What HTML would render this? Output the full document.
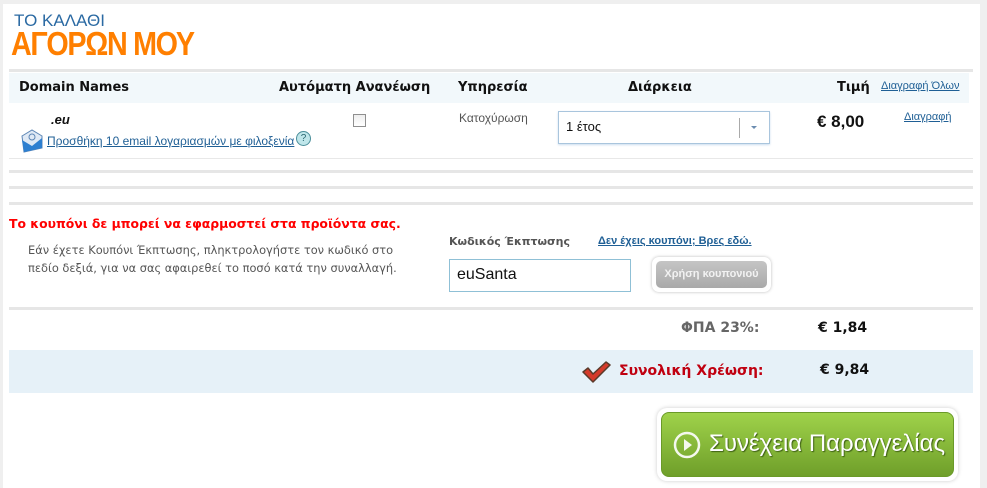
<!DOCTYPE html>
<html><head><meta charset="utf-8"><style>
*{margin:0;padding:0;box-sizing:border-box}
body{width:987px;height:488px;background:#efefef;position:relative;overflow:hidden;font-family:"Liberation Sans",Arial,sans-serif}
.panel{position:absolute;left:3px;top:4px;width:977px;height:484px;background:#fff}
.a{position:absolute;white-space:nowrap}
.bar{position:absolute;left:9px;width:964px;background:#e6e6e6}
.dv{font-family:"DejaVu Sans",Verdana,sans-serif}
a{color:#1f5f95}
</style></head><body>
<div class="panel"></div>
<div class="a" style="left:14px;top:11px;font-size:17px;color:#2b6aa3">ΤΟ ΚΑΛΑΘΙ</div>
<div class="a" style="left:11px;top:25px;font-size:33px;font-weight:bold;color:#ff7f00;letter-spacing:-1.5px;transform:scaleX(0.87);transform-origin:left">ΑΓΟΡΩΝ ΜΟΥ</div>
<div class="bar" style="top:69px;height:3px"></div>
<div class="a" style="left:9px;top:73px;width:960px;height:30px;background:#f2f8fb"></div>
<div class="a dv" style="left:19px;top:80px;font-size:13px;font-weight:bold;color:#111">Domain Names</div>
<div class="a dv" style="left:279px;top:80px;font-size:13px;font-weight:bold;color:#111">Αυτόματη Ανανέωση</div>
<div class="a dv" style="left:458px;top:80px;font-size:13px;font-weight:bold;color:#111">Υπηρεσία</div>
<div class="a dv" style="left:628px;top:80px;font-size:13px;font-weight:bold;color:#111">Διάρκεια</div>
<div class="a dv" style="left:837px;top:80px;font-size:13px;font-weight:bold;color:#111">Τιμή</div>
<div class="a" style="left:881px;top:80px;font-size:11px"><a href="#">Διαγραφή Όλων</a></div>
<div class="a" style="left:51px;top:112px;font-size:13px;font-weight:bold;font-style:italic;color:#111">.eu</div>
<svg class="a" style="left:20px;top:128px" width="24" height="26" viewBox="0 0 24 26"><path d="M2 8 L12 2 L22 8 L22 20 L4 24 Z" fill="#dfe9f5" stroke="#5d86b5"/><path d="M2 12 L12 18 L22 10 L22 20 L4 24Z" fill="#2d7fd0"/><circle cx="12" cy="9" r="3" fill="none" stroke="#5d86b5"/></svg>
<div class="a" style="left:47px;top:134px;font-size:12px"><a href="#">Προσθήκη 10 email λογαριασμών με φιλοξενία</a></div>
<div class="a" style="left:296px;top:131px;width:15px;height:15px;border-radius:50%;background:#bfe6ea;border:1px solid #4a8e9a;font-size:10px;color:#2a6670;text-align:center;line-height:13px">?</div>
<div class="a" style="left:353px;top:114px;width:13px;height:13px;border:1px solid #8f8f8f;background:linear-gradient(#eee,#fff)"></div>
<div class="a" style="left:459px;top:111px;font-size:12px;color:#555">Κατοχύρωση</div>
<div class="a" style="left:558px;top:111px;width:212px;height:33px;border:1px solid #a9c5dd;background:#fff;box-shadow:0 1px 2px #cde"></div>
<div class="a" style="left:739px;top:118px;width:1px;height:20px;background:#aaa"></div>
<div class="a" style="left:751px;top:126px;width:0;height:0;border-left:3px solid transparent;border-right:3px solid transparent;border-top:3px solid #6b8cb0"></div>
<div class="a" style="left:566px;top:119px;font-size:13px;color:#111">1 έτος</div>
<div class="a" style="left:817px;top:112px;font-size:17px;font-weight:bold;color:#111">€ 8,00</div>
<div class="a" style="left:904px;top:111px;font-size:11px"><a href="#">Διαγραφή</a></div>
<div class="bar" style="top:158px;height:1px;background:#e8e8e8"></div>
<div class="bar" style="top:170px;height:3px"></div>
<div class="bar" style="top:186px;height:3px"></div>
<div class="bar" style="top:202px;height:3px"></div>
<div class="a dv" style="left:9px;top:216px;font-size:12.4px;font-weight:bold;color:#f00">Το κουπόνι δε μπορεί να εφαρμοστεί στα προϊόντα σας.</div>
<div class="a dv" style="left:28px;top:241px;font-size:11.4px;line-height:18px;color:#555">Εάν έχετε Κουπόνι Έκπτωσης, πληκτρολογήστε τον κωδικό στο<br>πεδίο δεξιά, για να σας αφαιρεθεί το ποσό κατά την συναλλαγή.</div>
<div class="a dv" style="left:449px;top:235px;font-size:11px;font-weight:bold;color:#555">Κωδικός Έκπτωσης</div>
<div class="a" style="left:598px;top:235px;font-size:11px;font-weight:bold"><a href="#">Δεν έχεις κουπόνι; Βρες εδώ.</a></div>
<div class="a" style="left:449px;top:259px;width:182px;height:33px;border:1px solid #8fc0d6"></div>
<div class="a" style="left:457px;top:266px;font-size:16px;color:#111">euSanta</div>
<div class="a" style="left:652px;top:257px;width:119px;height:35px;border-radius:7px;background:#fff;box-shadow:0 0 3px #bbb"></div>
<div class="a" style="left:656px;top:261px;width:111px;height:27px;border-radius:5px;background:linear-gradient(#c5c5c5,#a9a9a9);color:#f2f2f2;font-size:11px;font-weight:bold;text-align:center;line-height:27px">Χρήση κουπονιού</div>
<div class="bar" style="top:307px;height:3px"></div>
<div class="a dv" style="left:681px;top:320px;font-size:14px;font-weight:bold;color:#666">ΦΠΑ 23%:</div>
<div class="a dv" style="left:818px;top:320px;font-size:14px;font-weight:bold;color:#111">€ 1,84</div>
<div class="a" style="left:9px;top:350px;width:964px;height:43px;background:#e6f1f8"></div>
<svg class="a" style="left:581px;top:359px" width="30" height="25" viewBox="0 0 30 25"><path d="M2 13 L7 9 L12 15 L25 3 L29 6 L12 23 Z" fill="#d43a2a" stroke="#5a3a2a" stroke-width="1.5" stroke-linejoin="round"/></svg>
<div class="a dv" style="left:619px;top:363px;font-size:14px;font-weight:bold;color:#c00010">Συνολική Χρέωση:</div>
<div class="a dv" style="left:820px;top:362px;font-size:14px;font-weight:bold;color:#111">€ 9,84</div>
<div class="a" style="left:657px;top:408px;width:301px;height:73px;border-radius:10px;background:#fff;box-shadow:0 0 4px #ccc"></div>
<div class="a" style="left:661px;top:412px;width:293px;height:65px;border-radius:8px;background:linear-gradient(#9fd24a,#6f9f2a);border:1px solid #6a9a28"></div>
<svg class="a" style="left:673px;top:431px" width="28" height="28" viewBox="0 0 28 28"><circle cx="14" cy="14" r="12" fill="none" stroke="#f4f8ee" stroke-width="2.5"/><path d="M11 8 L19 14 L11 20Z" fill="#f4f8ee"/></svg>
<div class="a" style="left:709px;top:430px;font-size:24px;color:#fff;text-shadow:1px 1px 1px #3e5f14">Συνέχεια Παραγγελίας</div>
</body></html>
